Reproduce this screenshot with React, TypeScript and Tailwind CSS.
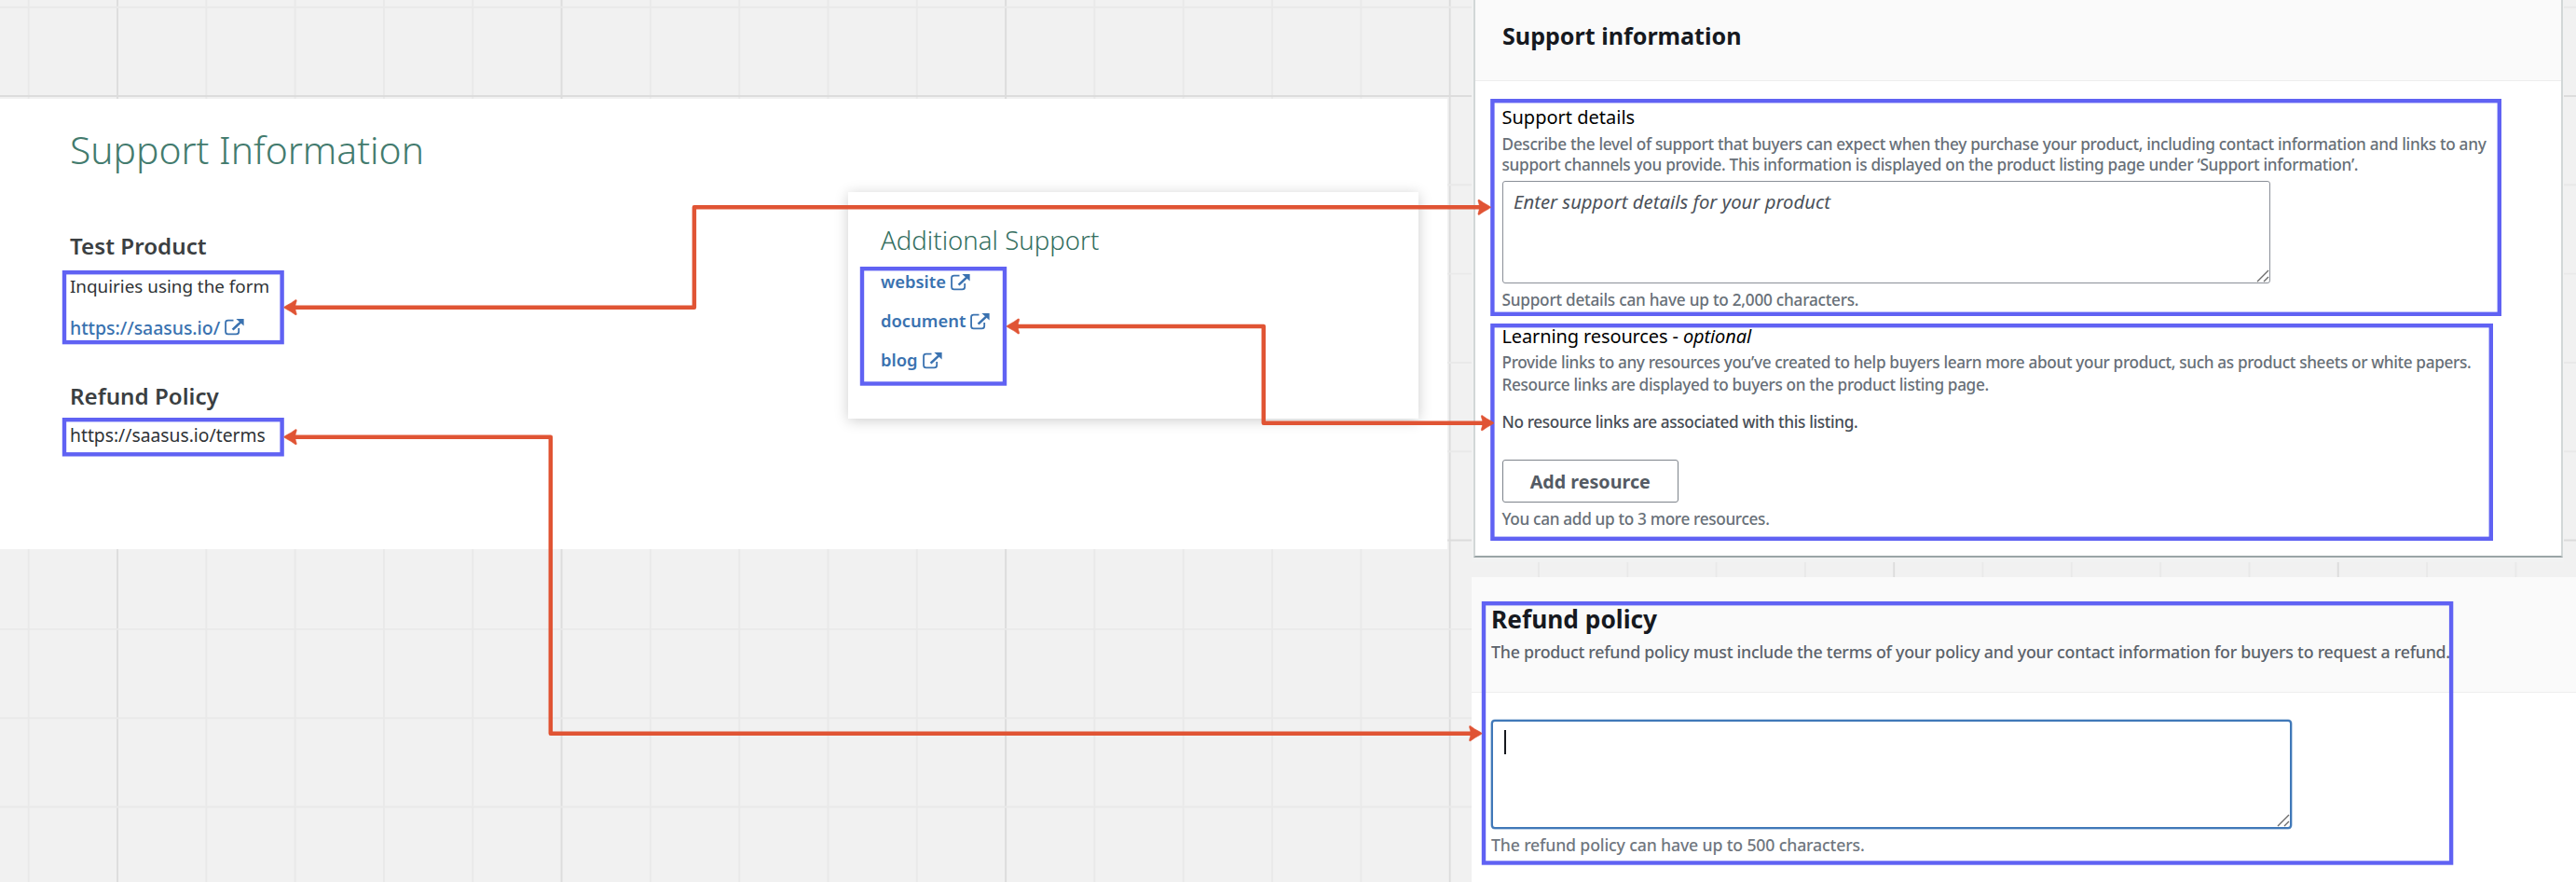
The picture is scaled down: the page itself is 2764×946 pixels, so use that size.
import React from "react";

const STEP = 95.31;
const columns = Array.from({ length: 30 }, (_, i) => ({ pos: 30.7 + i * STEP, major: i % 5 === 1 }));
const rows = Array.from({ length: 10 }, (_, i) => ({ pos: 7.7 + i * STEP, major: i % 5 === 1 }));

function CanvasGrid() {
  return (
    <svg className="absolute inset-0" width="2764" height="946" fill="none" strokeWidth="1.9">
      {columns.map((c) => (
        <path key={`m${c.pos}`} d={`M${c.pos} 0V946`} stroke={c.major ? "#dcdcdc" : "#e9e9e9"} />
      ))}
      {rows.map((r) => (
        <path key={`r${r.pos}`} d={`M0 ${r.pos}H2764`} stroke={r.major ? "#dcdcdc" : "#e9e9e9"} />
      ))}
    </svg>
  );
}

function ExternalIcon() {
  return (
    <svg width="21" height="18" viewBox="0 0 21 18" fill="none" className="mt-[4px] shrink-0">
      <path
        d="M9.5 1.6H3.6Q1.1 1.6 1.1 4V13.8Q1.1 16.4 3.6 16.4H12.4Q15.2 16.4 15.2 13.8V10"
        stroke="currentColor"
        strokeWidth="1.8"
      />
      <path d="M8.6 11.6L17.2 3.6" stroke="currentColor" strokeWidth="2.6" />
      <path d="M12.4 0H20.6V7.6Z" fill="currentColor" />
    </svg>
  );
}

function ExternalLink({ label }: { label: string }) {
  return (
    <a className="flex h-6 gap-[5px] text-[18.4px] leading-6 font-semibold text-[#3a72b0]">
      {label}
      <ExternalIcon />
    </a>
  );
}

function ResizeGrip() {
  return (
    <svg width="14" height="14" viewBox="0 0 14 14" fill="none" stroke="#6b6b6b" strokeWidth="1.4">
      <path d="M1 13L13 1M8 13L13 8" />
    </svg>
  );
}

function ListingPreview() {
  return (
    <section className="absolute top-[106px] left-0 flex h-[482.5px] w-[1552.5px] bg-white text-[#3b3f42]">
      <div className="flex w-[910px] flex-col items-start pl-[75px]">
        <h1 className="mt-[26px] text-[40.8px] leading-[56px] font-[330] text-[#437b6e]">Support Information</h1>
        <h2 className="mt-[60px] text-[24.2px] leading-8 font-semibold">Test Product</h2>
        <p className="mt-[13px] text-[18.9px] leading-7 tracking-[-0.03px] text-[#2f3336]">Inquiries using the form</p>
        <a className="mt-[16.5px] flex gap-[5px] text-[19.5px] leading-7 font-medium tracking-[-0.05px] text-[#3a72b0]">
          https://saasus.io/
          <ExternalIcon />
        </a>
        <h2 className="mt-[43px] text-[24.2px] leading-8 font-semibold">Refund Policy</h2>
        <p className="mt-[12.5px] text-[19.3px] leading-7 text-[#2f3336]">https://saasus.io/terms</p>
      </div>
      <aside className="mt-[100px] flex h-[243px] w-[611.5px] flex-col bg-white pt-[33px] pl-[35px] shadow-[0_2px_14px_rgba(0,0,0,0.2)]">
        <h3 className="text-[27.6px] leading-9 font-light text-[#356f61]">Additional Support</h3>
        <div className="mt-[14.5px] flex flex-col gap-[18.4px]">
          <ExternalLink label="website" />
          <ExternalLink label="document" />
          <ExternalLink label="blog" />
        </div>
      </aside>
    </section>
  );
}

function SupportForm() {
  return (
    <section className="absolute top-0 left-[1579px] h-[602.7px] w-[1171.5px] bg-[#f1f2f2] pr-px pl-[2px]">
      <div className="flex h-[597.5px] flex-col border-x-2 border-b-2 border-x-[#d2d7d7] border-b-[#9aa5a6] bg-white">
        <header className="h-[87px] border-b border-[#eeeeee] bg-[#fafafa] pt-[21.5px] pl-[29px]">
          <h2 className="text-[25.1px] leading-8 font-bold text-[#16191f]">Support information</h2>
        </header>
        <div className="flex flex-col items-start pt-[25px] pl-[28.5px] text-[17.2px] leading-[22.3px] font-medium tracking-[-0.3px] text-[#687078]">
          <label className="text-[20px] leading-7 font-normal tracking-normal text-black">Support details</label>
          <p className="mt-[3.6px] whitespace-nowrap">
            Describe the level of support that buyers can expect when they purchase your product, including contact
            information and links to any
            <br />
            support channels you provide. This information is displayed on the product listing page under ‘Support
            information’.
          </p>
          <div className="mt-[5.8px] flex h-[109.7px] w-[824px] items-end justify-between rounded-[3px] border-[1.5px] border-[#8a8f98] bg-white">
            <span className="self-start pt-[7.5px] pl-[11.5px] text-[20.3px] leading-7 font-normal tracking-normal italic text-[#4b5159]">
              Enter support details for your product
            </span>
            <ResizeGrip />
          </div>
          <p className="mt-[7px] tracking-[-0.23px]">Support details can have up to 2,000 characters.</p>
          <label className="mt-[14.5px] text-[20px] leading-7 font-normal tracking-[-0.12px] text-black">
            Learning resources - <i>optional</i>
          </label>
          <p className="mt-[1.4px] leading-[23.7px] tracking-[-0.345px] whitespace-nowrap">
            Provide links to any resources you’ve created to help buyers learn more about your product, such as product
            sheets or white papers.
            <br />
            Resource links are displayed to buyers on the product listing page.
          </p>
          <p className="mt-[17.6px] tracking-[-0.35px] text-[#474d55]">
            No resource links are associated with this listing.
          </p>
          <button className="mt-[29px] flex h-[45.5px] w-[189.5px] items-center justify-center rounded-[3px] border-[1.5px] border-[#7d838b] bg-white pt-[3px] text-[19.7px] font-bold tracking-normal text-[#545b64]">
            Add resource
          </button>
          <p className="mt-[7.6px] tracking-[-0.33px]">You can add up to 3 more resources.</p>
        </div>
      </div>
    </section>
  );
}

function RefundForm() {
  return (
    <section className="absolute top-[618.7px] left-[1579px] flex h-[327.3px] w-[1185px] flex-col bg-white">
      <header className="flex h-[124px] flex-col border-b border-[#eeeeee] bg-[#fafafa] pt-[28px] pl-[21px]">
        <h2 className="text-[26.3px] leading-[34px] font-bold text-[#16191f]">Refund policy</h2>
        <p className="mt-[6.5px] text-[17.8px] leading-6 font-medium tracking-[-0.25px] whitespace-nowrap text-[#5c636b]">
          The product refund policy must include the terms of your policy and your contact information for buyers to
          request a refund.
        </p>
      </header>
      <div className="flex flex-col pt-[29.7px] pl-[20.5px]">
        <div className="flex h-[116.5px] w-[859px] items-end justify-between rounded-[4px] border-2 border-[#4078b8] bg-white shadow-[0_0_0_0.5px_#7fa6d0]">
          <span className="mt-[9px] ml-[12px] h-[26px] w-[2px] self-start bg-[#16191f]" />
          <ResizeGrip />
        </div>
        <p className="mt-[6px] pl-[0.5px] text-[17.7px] leading-[22px] font-medium tracking-[-0.16px] text-[#70777f]">
          The refund policy can have up to 500 characters.
        </p>
      </div>
    </section>
  );
}

const highlights = [
  [66.8, 290, 304.8, 369.3],
  [66.8, 448, 304.8, 489.5],
  [922.8, 286, 1080.2, 413.7],
  [1599.2, 106, 2684, 339],
  [1599.2, 347, 2675, 580],
  [1589.8, 645, 2632.3, 927.7],
];

const HEAD =
  "M0 0Q1 -1 3 -2.1Q8 -4.6 12.4 -8Q14 -8.4 13.6 -6.8Q12.2 -3 12.2 0Q12.2 3 13.6 6.8Q14 8.4 12.4 8Q8 4.6 3 2.1Q1 1 0 0Z";

const connectors = [
  { d: "M315 329.7H744.9V222.3H1589", from: [304.6, 329.7], to: [1599.6, 222.3] },
  { d: "M1090 350H1355.8V453.7H1593", from: [1080, 350], to: [1603, 453.7] },
  { d: "M315 468.7H590.8V786.7H1580", from: [304.6, 468.7], to: [1590.2, 786.7] },
];

function Annotations() {
  return (
    <svg className="pointer-events-none absolute inset-0" width="2764" height="946" fill="none">
      {highlights.map(([x1, y1, x2, y2]) => (
        <rect
          key={`${x1}-${y1}`}
          x={x1 + 2.2}
          y={y1 + 2.2}
          width={x2 - x1 - 4.4}
          height={y2 - y1 - 4.4}
          stroke="#6062f3"
          strokeWidth="4.4"
        />
      ))}
      {connectors.map((c) => (
        <g key={c.d}>
          <path d={c.d} stroke="#e05434" strokeWidth="4.5" strokeLinejoin="round" />
          <path
            d={HEAD}
            fill="#e05434"
            stroke="#e05434"
            strokeWidth="0.6"
            transform={`translate(${c.from[0]} ${c.from[1]})`}
          />
          <path
            d={HEAD}
            fill="#e05434"
            stroke="#e05434"
            strokeWidth="0.6"
            transform={`translate(${c.to[0]} ${c.to[1]}) scale(-1 1)`}
          />
        </g>
      ))}
    </svg>
  );
}

export default function App() {
  return (
    <main className="relative h-[946px] w-[2764px] overflow-hidden bg-[#f1f1f1] font-['Noto_Sans',sans-serif]">
      <CanvasGrid />
      <ListingPreview />
      <SupportForm />
      <RefundForm />
      <Annotations />
    </main>
  );
}
